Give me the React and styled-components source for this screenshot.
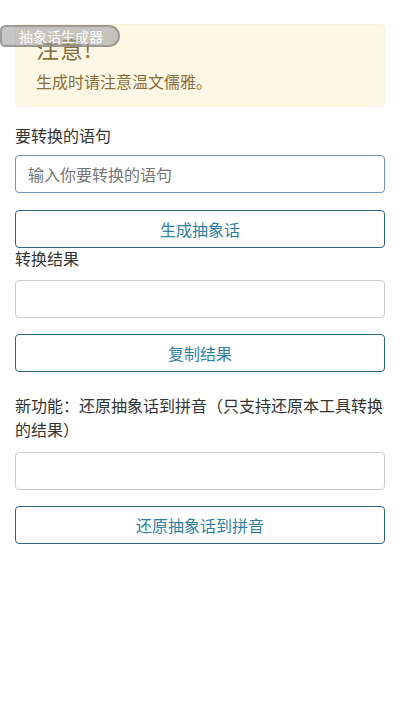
import React from 'react'
import styled, { createGlobalStyle } from 'styled-components'

const GlobalStyle = createGlobalStyle`
  * { box-sizing: border-box; }
  body {
    margin: 0;
    background: #fff;
    font-family: "Noto Sans CJK SC", "Noto Sans", sans-serif;
    color: #333;
  }
`

const Page = styled.div`
  position: relative;
  padding: 24px 15px;
`

const Badge = styled.div`
  position: absolute;
  top: 25px;
  left: 0;
  width: 120px;
  height: 22px;
  padding-left: 17px;
  border: 2px solid rgba(120, 120, 120, 0.55);
  border-radius: 6px 12px 12px 6px;
  background: rgba(160, 160, 160, 0.6);
  color: #fff;
  font-size: 14px;
  line-height: 18px;
  z-index: 2;
`

const Alert = styled.div`
  padding: 8px 20px 13px;
  border: 1px solid #fbf1dc;
  border-radius: 4px;
  background: #fdf8e5;
  color: #8a6d3b;
  margin-bottom: 16px;
`

const AlertTitle = styled.h4`
  margin: 0;
  font-size: 23px;
  font-weight: 400;
  line-height: 30px;
  letter-spacing: 1px;
`

const AlertText = styled.p`
  margin: 6px 0 0;
  font-size: 16px;
  line-height: 24px;
`

const Label = styled.div`
  font-size: 16px;
  line-height: 24px;
  margin-top: ${p => p.$gap || 0}px;
  margin-bottom: ${p => p.$space || 8}px;
`

const Input = styled.input`
  display: block;
  width: 100%;
  height: 38px;
  padding: 0 12px;
  border: 1px solid ${p => (p.$active ? '#6f97b5' : '#ccc')};
  border-radius: 4px;
  font-family: inherit;
  font-size: 16px;
  color: #333;
  outline: none;

  &::placeholder {
    color: #777;
  }
`

const Button = styled.button`
  display: block;
  width: 100%;
  height: 38px;
  margin-top: ${p => p.$gap || 16}px;
  border: 1px solid #2b6782;
  border-radius: 4px;
  background: #fff;
  color: #2f7fa5;
  font-family: inherit;
  font-size: 16px;
  cursor: pointer;
`

export default function App() {
  return (
    <>
      <GlobalStyle />
      <Page>
        <Badge>抽象话生成器</Badge>
        <Alert>
          <AlertTitle>注意!</AlertTitle>
          <AlertText>生成时请注意温文儒雅。</AlertText>
        </Alert>

        <Label>要转换的语句</Label>
        <Input $active placeholder="输入你要转换的语句" />
        <Button $gap={17}>生成抽象话</Button>

        <Label $gap={-2} $space={10}>转换结果</Label>
        <Input />
        <Button>复制结果</Button>

        <Label $gap={21} $space={11}>新功能：还原抽象话到拼音（只支持还原本工具转换的结果）</Label>
        <Input />
        <Button>还原抽象话到拼音</Button>
      </Page>
    </>
  )
}
